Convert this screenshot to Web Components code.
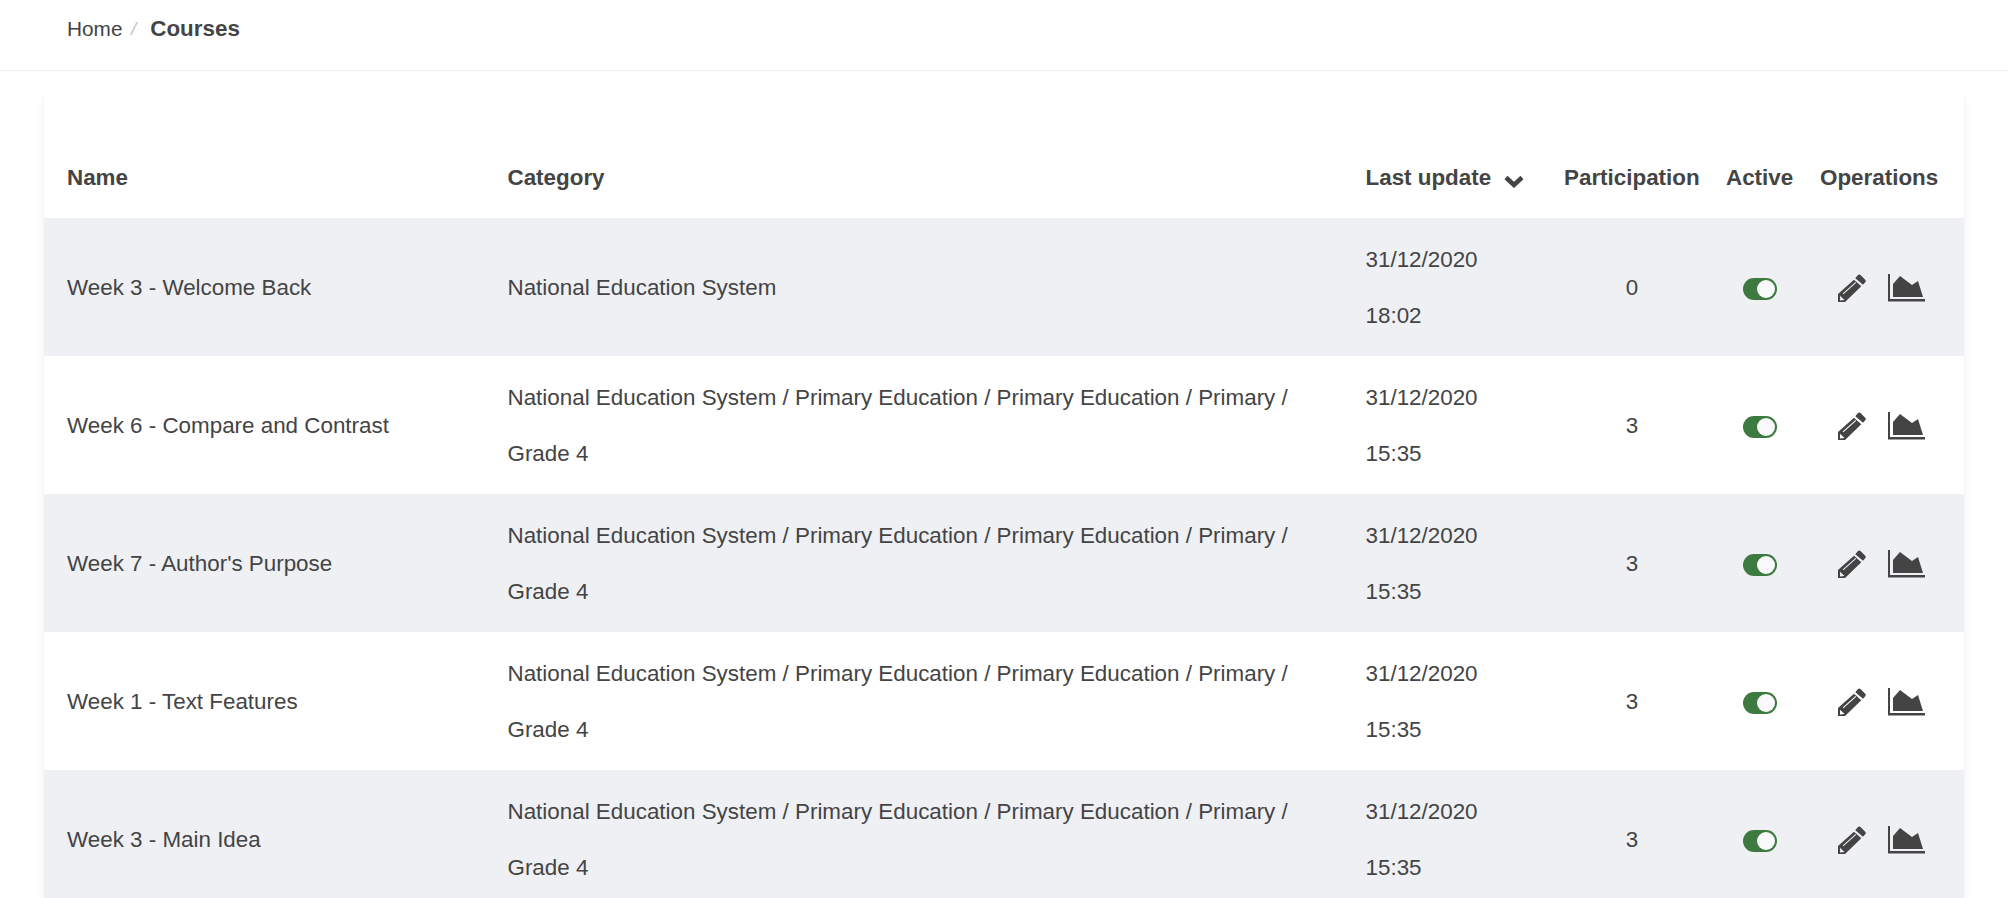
<!DOCTYPE html>
<html lang="en">
  <head>
    <meta charset="UTF-8" />
    <title>Courses</title>
    <style>
      html, body {
        margin: 0;
        height: 898px;
        overflow: hidden;
        background: #fff;
        color: #444;
        font-family: "Liberation Sans", Arial, sans-serif;
        font-size: 22.4px;
      }
    </style>
  </head>
  <body>
    <bread-crumbs current="Courses">Home</bread-crumbs>
    <course-card>
      <course-head></course-head>
      <course-row name="Week 3 - Welcome Back" date="31/12/2020" time="18:02" count="0">National Education System</course-row>
      <course-row name="Week 6 - Compare and Contrast" date="31/12/2020" time="15:35" count="3">National Education System / Primary Education / Primary Education / Primary / Grade 4</course-row>
      <course-row name="Week 7 - Author's Purpose" date="31/12/2020" time="15:35" count="3">National Education System / Primary Education / Primary Education / Primary / Grade 4</course-row>
      <course-row name="Week 1 - Text Features" date="31/12/2020" time="15:35" count="3">National Education System / Primary Education / Primary Education / Primary / Grade 4</course-row>
      <course-row name="Week 3 - Main Idea" date="31/12/2020" time="15:35" count="3">National Education System / Primary Education / Primary Education / Primary / Grade 4</course-row>
    </course-card>
    <script>
      const COLUMNS = "463.500px 858px 198.500px 162px 94px 144px";

      class BreadCrumbs extends HTMLElement {
        constructor() {
          super();
          this.attachShadow({ mode: "open" });
          this.shadowRoot.innerHTML = `
            <style>
              :host {
                display: flex;
                align-items: center;
                box-sizing: border-box;
                height: 71px;
                padding: 0 0 13px 67px;
                border-bottom: 1px solid #eeeeee;
                font-size: 20.800px;
              }
              .sep { color: #c4c4c4; margin: 0 14px 0 8.500px; font-style: italic; font-size: 19px; }
              b { font-size: 22.400px; }
            </style>
            <slot></slot><span class="sep">/</span><b></b>`;
          this.shadowRoot.querySelector("b").textContent = this.getAttribute("current");
        }
      }

      class CourseCard extends HTMLElement {
        constructor() {
          super();
          this.attachShadow({ mode: "open" });
          this.shadowRoot.innerHTML = `
            <style>
              :host {
                display: block;
                width: 1920px;
                margin: 22px 0 0 44px;
                border-radius: 6px 6px 0 0;
                background: #fff;
                box-shadow: 0 5px 8px rgba(60, 70, 130, 0.09);
              }
            </style>
            <slot></slot>`;
        }
      }

      class CourseHead extends HTMLElement {
        constructor() {
          super();
          this.attachShadow({ mode: "open" });
          this.shadowRoot.innerHTML = `
            <style>
              :host {
                display: grid;
                grid-template-columns: ${COLUMNS};
                align-items: center;
                height: 125px;
                font-weight: bold;
              }
              div { padding-top: 45px; white-space: nowrap; }
              .name { padding-left: 23px; }
              svg { margin-left: 13px; vertical-align: -3px; }
            </style>
            <div class="name">Name</div>
            <div>Category</div>
            <div>Last update<svg width="20" height="14" viewBox="0 0 20 14"><path d="M2 3.500L10 11L18 3.500" fill="none" stroke="#444" stroke-width="4.500"/></svg></div>
            <div>Participation</div>
            <div>Active</div>
            <div>Operations</div>`;
        }
      }

      class CourseRow extends HTMLElement {
        constructor() {
          super();
          this.attachShadow({ mode: "open" });
          this.shadowRoot.innerHTML = `
            <style>
              :host {
                display: grid;
                grid-template-columns: ${COLUMNS};
                align-items: center;
                box-sizing: border-box;
                height: 138px;
                padding-top: 2px;
                line-height: 56px;
                background: #fff;
              }
              :host(:nth-child(even)) { background: #eff0f4; }
              .name { padding-left: 23px; }
              .cat { padding-right: 60px; }
              .count, .toggle-cell { text-align: center; padding-right: 26px; }
              .toggle {
                display: inline-flex;
                justify-content: flex-end;
                align-items: center;
                box-sizing: border-box;
                width: 34px;
                height: 22px;
                padding: 0 2px;
                border-radius: 11px;
                background: #3d7a3f;
                vertical-align: middle;
              }
              .toggle i { width: 18px; height: 18px; border-radius: 50%; background: #fafafc; }
              .ops { display: flex; align-items: center; gap: 22px; padding-left: 18px; }
              svg { display: block; fill: #444; }
            </style>
            <div class="name"></div>
            <div class="cat"><slot></slot></div>
            <div class="when"><div class="date"></div><div class="time"></div></div>
            <div class="count"></div>
            <div class="toggle-cell"><span class="toggle"><i></i></span></div>
            <div class="ops">
              <svg width="28" height="28" viewBox="0 0 28 28"><path d="M19.500 1.500Q21 0 22.500 1L27 5.500Q28.500 7 27 8.500L25 10.700L17.300 4.300ZM16 5.700L23.300 12.300L7 28H0V20ZM4.700 19.500L17.500 8L18.200 8.800L5.400 20.300ZM2 21.800L6.500 26L2 26.500Z" fill-rule="evenodd"/></svg>
              <svg width="37" height="28" viewBox="0 0 37 28"><path d="M0 0H2V25H37V27.500H0Z"/><path d="M5 23V10L12 2L24 11L30 7L35 23Z"/></svg>
            </div>`;
          const root = this.shadowRoot;
          root.querySelector(".name").textContent = this.getAttribute("name");
          root.querySelector(".date").textContent = this.getAttribute("date");
          root.querySelector(".time").textContent = this.getAttribute("time");
          root.querySelector(".count").textContent = this.getAttribute("count");
        }
      }

      customElements.define("bread-crumbs", BreadCrumbs);
      customElements.define("course-card", CourseCard);
      customElements.define("course-head", CourseHead);
      customElements.define("course-row", CourseRow);
    </script>
  </body>
</html>
